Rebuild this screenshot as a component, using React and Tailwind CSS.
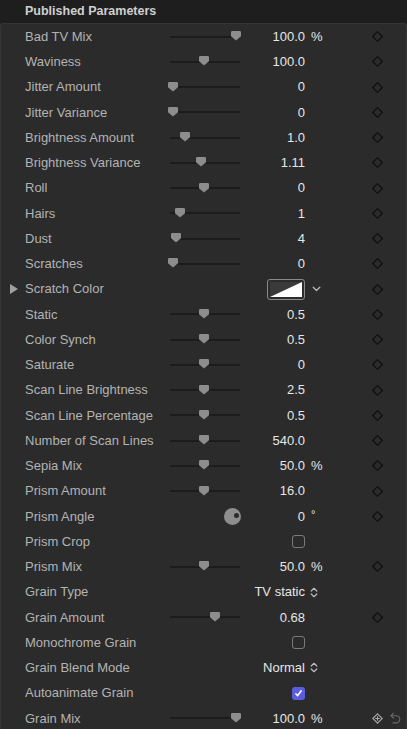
import React from "react";

const rows = [
  { label: "Bad TV Mix", type: "slider", thumb: 236, value: "100.0", unit: "%" },
  { label: "Waviness", type: "slider", thumb: 204, value: "100.0" },
  { label: "Jitter Amount", type: "slider", thumb: 173, value: "0" },
  { label: "Jitter Variance", type: "slider", thumb: 173, value: "0" },
  { label: "Brightness Amount", type: "slider", thumb: 185, value: "1.0" },
  { label: "Brightness Variance", type: "slider", thumb: 201, value: "1.11" },
  { label: "Roll", type: "slider", thumb: 204, value: "0" },
  { label: "Hairs", type: "slider", thumb: 180, value: "1" },
  { label: "Dust", type: "slider", thumb: 176, value: "4" },
  { label: "Scratches", type: "slider", thumb: 173, value: "0" },
  { label: "Scratch Color", type: "color" },
  { label: "Static", type: "slider", thumb: 204, value: "0.5" },
  { label: "Color Synch", type: "slider", thumb: 204, value: "0.5" },
  { label: "Saturate", type: "slider", thumb: 204, value: "0" },
  { label: "Scan Line Brightness", type: "slider", thumb: 204, value: "2.5" },
  { label: "Scan Line Percentage", type: "slider", thumb: 204, value: "0.5" },
  { label: "Number of Scan Lines", type: "slider", thumb: 204, value: "540.0" },
  { label: "Sepia Mix", type: "slider", thumb: 204, value: "50.0", unit: "%" },
  { label: "Prism Amount", type: "slider", thumb: 204, value: "16.0" },
  { label: "Prism Angle", type: "dial", value: "0", unit: "°" },
  { label: "Prism Crop", type: "check", noKey: true },
  { label: "Prism Mix", type: "slider", thumb: 204, value: "50.0", unit: "%" },
  { label: "Grain Type", type: "popup", value: "TV static", noKey: true },
  { label: "Grain Amount", type: "slider", thumb: 215, value: "0.68" },
  { label: "Monochrome Grain", type: "check", noKey: true },
  { label: "Grain Blend Mode", type: "popup", value: "Normal", noKey: true },
  { label: "Autoanimate Grain", type: "checkOn", noKey: true },
  { label: "Grain Mix", type: "slider", thumb: 236, value: "100.0", unit: "%", last: true },
];

function Diamond() {
  return (
    <svg width="11" height="11" viewBox="0 0 11 11">
      <path d="M5.5 0.7 L10.3 5.5 L5.5 10.3 L0.7 5.5 Z" fill="none" stroke="#0f0f0f" strokeWidth="1.2" />
    </svg>
  );
}

function DiamondPlus() {
  return (
    <svg width="11" height="11" viewBox="0 0 11 11">
      <path d="M5.5 0.8 L10.2 5.5 L5.5 10.2 L0.8 5.5 Z" fill="none" stroke="#a8a8a8" strokeWidth="1.1" />
      <path d="M5.5 3.2 V7.8 M3.2 5.5 H7.8" stroke="#a8a8a8" strokeWidth="1.1" />
    </svg>
  );
}

function Undo() {
  return (
    <svg width="11" height="12" viewBox="0 0 11 12">
      <path d="M3.5 1.2 L1 3.7 L3.5 6.2" fill="none" stroke="#6a6a6a" strokeWidth="1.1" strokeLinejoin="round" strokeLinecap="round" />
      <path d="M1.2 3.7 H6.2 A3.6 3.6 0 0 1 6.2 10.9 H3" fill="none" stroke="#6a6a6a" strokeWidth="1.1" strokeLinecap="round" />
    </svg>
  );
}

function Slider({ thumb }) {
  return (
    <div className="relative h-full w-[70px]">
      <div className="absolute left-0 right-0 top-1/2 h-[2px] -translate-y-1/2 bg-[#1c1c1c]" />
      <svg
        className="absolute top-[7px]"
        style={{ left: thumb - 170 - 5 }}
        width="10"
        height="10"
        viewBox="0 0 10 10"
      >
        <path d="M1.2 0 H8.8 Q10 0 10 1.2 V5.2 L5 9.4 L0 5.2 V1.2 Q0 0 1.2 0 Z" fill="#8d8d8d" />
      </svg>
    </div>
  );
}

function UpDown() {
  return (
    <svg width="8" height="11" viewBox="0 0 8 11">
      <path d="M1.2 4 L4 1.3 L6.8 4 M1.2 7 L4 9.7 L6.8 7" fill="none" stroke="#bdbdbd" strokeWidth="1.2" strokeLinecap="round" strokeLinejoin="round" />
    </svg>
  );
}

function Row({ r }) {
  return (
    <div className="flex h-[25.26px] items-center">
      <div className="flex w-[25px] items-center pl-[10px]">
        {r.type === "color" && (
          <svg width="8" height="10" viewBox="0 0 8 10">
            <path d="M0 0 L8 5 L0 10 Z" fill="#a0a0a0" />
          </svg>
        )}
      </div>
      <div className="w-[145px] truncate text-[13px] text-[#b3b3b3]">{r.label}</div>
      <div className="flex h-full w-[70px] items-center justify-end">
        {r.type === "slider" && <Slider thumb={r.thumb} />}
        {r.type === "dial" && (
          <div className="relative mr-[-1px] h-[17px] w-[17px] rounded-full bg-[#8e8e8e]">
            <div className="absolute left-[10px] top-[5.5px] h-[5px] w-[5px] rounded-full bg-[#2a2a2a]" />
          </div>
        )}
      </div>
      <div className="flex w-[65px] items-center justify-end text-[13px] text-[#e6e6e6]">
        {(r.type === "slider" || r.type === "dial" || r.type === "popup") && <span>{r.value}</span>}
        {r.type === "check" && (
          <div className="h-[13px] w-[13px] rounded-[3px] border border-[#7a7a7a]" />
        )}
        {r.type === "checkOn" && (
          <div className="flex h-[13px] w-[13px] items-center justify-center rounded-[3px] bg-[#5c5ce0]">
            <svg width="9" height="9" viewBox="0 0 9 9">
              <path d="M1.8 4.8 L3.6 6.8 L7.2 1.8" fill="none" stroke="#ffffff" strokeWidth="1.5" strokeLinecap="round" strokeLinejoin="round" />
            </svg>
          </div>
        )}
        {r.type === "color" && (
          <div className="h-[21px] w-[38px] overflow-hidden rounded-[3px] border border-[#8a8a8a] p-[2px]">
            <svg width="32" height="15" viewBox="0 0 32 15" preserveAspectRatio="none">
              <rect x="0" y="0" width="32" height="15" fill="#3a3a3a" />
              <path d="M32 0 L32 15 L0 15 Z" fill="#ffffff" />
            </svg>
          </div>
        )}
      </div>
      <div className="flex w-[67px] items-center text-[13px] text-[#e6e6e6]">
        {r.unit === "%" && <span className="ml-[6px]">%</span>}
        {r.unit === "°" && <span className="ml-[6px] -translate-y-[2px] text-[11px]">°</span>}
        {r.type === "popup" && (
          <span className="ml-[5px] flex items-center">
            <UpDown />
          </span>
        )}
        {r.type === "color" && (
          <svg className="ml-[7px]" width="9" height="6" viewBox="0 0 9 6">
            <path d="M1.2 1.3 L4.5 4.5 L7.8 1.3" fill="none" stroke="#b8b8b8" strokeWidth="1.3" strokeLinecap="round" strokeLinejoin="round" />
          </svg>
        )}
      </div>
      <div className="flex items-center">
        {r.last ? (
          <>
            <DiamondPlus />
            <span className="ml-[7px]">
              <Undo />
            </span>
          </>
        ) : (
          !r.noKey && <Diamond />
        )}
      </div>
    </div>
  );
}

export default function App() {
  return (
    <div
      className="h-[729px] w-[407px] overflow-hidden bg-[#1e1e1e]"
      style={{ fontFamily: '"Liberation Sans", Arial, sans-serif' }}
    >
      <div className="flex h-[23px] items-center pl-[25px] text-[12.5px] font-bold text-[#cfcfcf]">
        Published Parameters
      </div>
      <div className="h-[706px] rounded-tl-[3px] rounded-tr-[3px] border-l border-r border-t border-[#353535] bg-[#2b2b2b]">
        <div className="-ml-px">
          {rows.map((r) => (
            <Row key={r.label} r={r} />
          ))}
        </div>
      </div>
    </div>
  );
}
